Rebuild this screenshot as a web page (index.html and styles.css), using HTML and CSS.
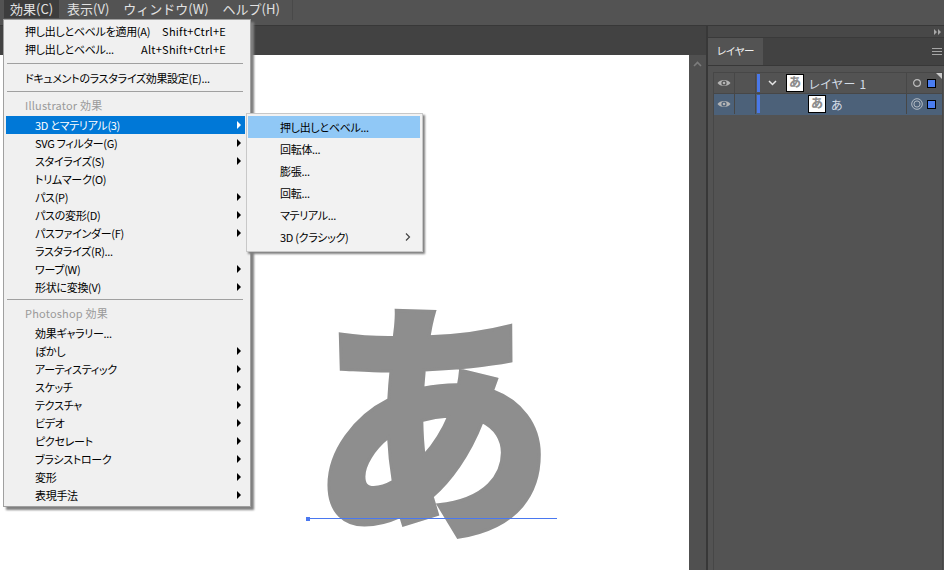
FILE: index.html
```html
<!DOCTYPE html>
<html lang="ja">
<head>
    <meta charset="UTF-8">
    <title>Illustrator 効果メニュー</title>
    <link rel="stylesheet" href="styles.css">
</head>
<body>
    <div class="app">
        <div class="menubar">
            <div class="menubar-item active">効果(C)</div>
            <div class="menubar-item">表示(V)</div>
            <div class="menubar-item">ウィンドウ(W)</div>
            <div class="menubar-item">ヘルプ(H)</div>
            <div class="menubar-sep"></div>
        </div>

        <div class="workspace">
            <div class="document">
                <div class="doc-tabs"></div>
                <div class="doc-body">
                    <div class="canvas">
                        <div class="big-glyph">あ</div>
                        <div class="baseline"></div>
                        <div class="anchor"></div>
                    </div>
                    <div class="scrollbar">
                        <svg class="scroll-up" width="9" height="6" viewBox="0 0 9 6"><path d="M1 5 L4.5 1.5 L8 5" fill="none" stroke="#7c7c7c" stroke-width="1.6"/></svg>
                    </div>
                </div>
            </div>

            <div class="panel">
                <div class="panel-top">
                    <svg width="8" height="6" viewBox="0 0 8 6"><path d="M0 0 L3 3 L0 6 Z M4 0 L7 3 L4 6 Z" fill="#a8a8a8"/></svg>
                </div>
                <div class="panel-tabs">
                    <div class="panel-tab">レイヤー</div>
                    <div class="panel-menu"><span></span><span></span><span></span></div>
                </div>
                <div class="layers">
                    <div class="layer-row">
                        <div class="col-eye">
                            <svg width="14" height="10" viewBox="0 0 14 10"><path d="M0.5 5 C3 1 11 1 13.5 5 C11 9 3 9 0.5 5 Z" fill="#b4b4b4"/><circle cx="7" cy="5" r="2.6" fill="#535353"/><circle cx="7" cy="5" r="1.3" fill="#b4b4b4"/></svg>
                        </div>
                        <div class="col-lock"></div>
                        <div class="col-color"><div class="color-bar"></div></div>
                        <div class="col-name">
                            <svg class="chevron" width="9" height="6" viewBox="0 0 9 6"><path d="M1 1 L4.5 4.5 L8 1" fill="none" stroke="#e6e6e6" stroke-width="1.5"/></svg>
                            <div class="thumb">あ</div>
                            <div class="layer-label">レイヤー 1</div>
                        </div>
                        <div class="col-target">
                            <svg width="12" height="12" viewBox="0 0 12 12"><circle cx="6" cy="6" r="3.4" fill="none" stroke="#bdbdbd" stroke-width="1.2"/></svg>
                            <div class="select-box"></div>
                            <div class="corner"></div>
                        </div>
                    </div>
                    <div class="layer-row selected">
                        <div class="col-eye">
                            <svg width="14" height="10" viewBox="0 0 14 10"><path d="M0.5 5 C3 1 11 1 13.5 5 C11 9 3 9 0.5 5 Z" fill="#b4b4b4"/><circle cx="7" cy="5" r="2.6" fill="#4c6179"/><circle cx="7" cy="5" r="1.3" fill="#b4b4b4"/></svg>
                        </div>
                        <div class="col-lock"></div>
                        <div class="col-color"><div class="color-bar"></div></div>
                        <div class="col-name sublayer">
                            <div class="thumb">あ</div>
                            <div class="layer-label">あ</div>
                        </div>
                        <div class="col-target">
                            <svg width="12" height="12" viewBox="0 0 14 14"><circle cx="7" cy="7" r="6.2" fill="none" stroke="#b9c0c8" stroke-width="1.1"/><circle cx="7" cy="7" r="3.6" fill="none" stroke="#b9c0c8" stroke-width="1.1"/></svg>
                            <div class="select-box"></div>
                        </div>
                    </div>
                </div>
            </div>
        </div>
    </div>

    <div class="menu effects-menu">
        <div class="item top"><span>押し出しとベベルを適用(A)</span><span class="shortcut">Shift+Ctrl+E</span></div>
        <div class="item top"><span>押し出しとベベル...</span><span class="shortcut">Alt+Shift+Ctrl+E</span></div>
        <div class="sep first"></div>
        <div class="item top"><span>ドキュメントのラスタライズ効果設定(E)...</span></div>
        <div class="sep"></div>
        <div class="heading">Illustrator 効果</div>
        <div class="item current sub"><span>3D とマテリアル(3)</span><i class="arrow"></i></div>
        <div class="item sub"><span>SVG フィルター(G)</span><i class="arrow"></i></div>
        <div class="item sub"><span>スタイライズ(S)</span><i class="arrow"></i></div>
        <div class="item"><span>トリムマーク(O)</span></div>
        <div class="item sub"><span>パス(P)</span><i class="arrow"></i></div>
        <div class="item sub"><span>パスの変形(D)</span><i class="arrow"></i></div>
        <div class="item sub"><span>パスファインダー(F)</span><i class="arrow"></i></div>
        <div class="item"><span>ラスタライズ(R)...</span></div>
        <div class="item sub"><span>ワープ(W)</span><i class="arrow"></i></div>
        <div class="item sub"><span>形状に変換(V)</span><i class="arrow"></i></div>
        <div class="sep last"></div>
        <div class="heading">Photoshop 効果</div>
        <div class="item"><span>効果ギャラリー...</span></div>
        <div class="item sub"><span>ぼかし</span><i class="arrow"></i></div>
        <div class="item sub"><span>アーティスティック</span><i class="arrow"></i></div>
        <div class="item sub"><span>スケッチ</span><i class="arrow"></i></div>
        <div class="item sub"><span>テクスチャ</span><i class="arrow"></i></div>
        <div class="item sub"><span>ビデオ</span><i class="arrow"></i></div>
        <div class="item sub"><span>ピクセレート</span><i class="arrow"></i></div>
        <div class="item sub"><span>ブラシストローク</span><i class="arrow"></i></div>
        <div class="item sub"><span>変形</span><i class="arrow"></i></div>
        <div class="item sub"><span>表現手法</span><i class="arrow"></i></div>
    </div>

    <div class="submenu">
        <div class="sub-item hover">押し出しとベベル...</div>
        <div class="sub-item">回転体...</div>
        <div class="sub-item">膨張...</div>
        <div class="sub-item">回転...</div>
        <div class="sub-item">マテリアル...</div>
        <div class="sub-item"><span>3D (クラシック)</span>
            <svg width="6" height="8" viewBox="0 0 6 8"><path d="M1 0.5 L4.5 4 L1 7.5" fill="none" stroke="#444" stroke-width="1.2"/></svg>
        </div>
    </div>
</body>
</html>
```

FILE: styles.css
```css
* {
    box-sizing: border-box;
}
html, body {
    margin: 0;
    height: 100%;
    overflow: hidden;
}
body {
    font-family: "Noto Sans CJK JP", "Noto Sans", sans-serif;
    font-size: 11px;
    letter-spacing: -0.3px;
    font-feature-settings: "palt";
    background: #535353;
    color: #000;
}
.app {
    display: flex;
    flex-direction: column;
    height: 570px;
}

/* menu bar */
.menubar {
    display: flex;
    height: 26px;
    flex: none;
    padding-left: 4px;
    background: #535353;
    border-bottom: 1px solid #383838;
}
.menubar-item {
    height: 18px;
    padding: 0 6px;
    margin-right: 2px;
    color: #e2e2e2;
    font-size: 13px;
    line-height: 17px;
    letter-spacing: 0;
    font-feature-settings: normal;
}
.menubar-item.active {
    background: #3d3d3d;
}
.menubar-sep {
    width: 1px;
    height: 20px;
    margin-left: 4px;
    background: #494949;
}

/* document */
.workspace {
    display: flex;
    flex: 1;
    min-height: 0;
}
.document {
    display: flex;
    flex-direction: column;
    width: 706px;
}
.doc-tabs {
    height: 29px;
    flex: none;
    background: #424242;
}
.doc-body {
    display: flex;
    flex: 1;
}
.canvas {
    position: relative;
    width: 689px;
    background: #fff;
    overflow: hidden;
}
.big-glyph {
    position: absolute;
    left: 307px;
    top: 227px;
    font-size: 250px;
    line-height: 250px;
    font-weight: 900;
    letter-spacing: 0;
    color: #8e8e8e;
    -webkit-text-stroke: 3px #8e8e8e;
    font-feature-settings: normal;
    transform: scale(0.985, 1.02);
}
.baseline {
    position: absolute;
    left: 307px;
    top: 463px;
    width: 250px;
    height: 1px;
    background: #4a78f0;
}
.anchor {
    position: absolute;
    left: 306px;
    top: 462px;
    width: 4px;
    height: 4px;
    background: #4a78f0;
}
.scrollbar {
    flex: 1;
    background: #505050;
    padding: 6px 0 0 4px;
}
.scroll-up {
    display: block;
}

/* layers panel */
.panel {
    display: flex;
    flex-direction: column;
    flex: 1;
    background: #535353;
    border-left: 2px solid #383838;
}
.panel-top {
    display: flex;
    justify-content: flex-end;
    align-items: center;
    height: 12px;
    flex: none;
    padding-right: 2px;
    background: #484848;
    border-bottom: 1px solid #3a3a3a;
}
.panel-tabs {
    display: flex;
    height: 28px;
    flex: none;
    background: #424242;
    border-bottom: 1px solid #383838;
}
.panel-tab {
    width: 55px;
    height: 27px;
    background: #535353;
    color: #f0f0f0;
    font-size: 10.5px;
    line-height: 25px;
    text-align: center;
}
.panel-menu {
    display: flex;
    flex-direction: column;
    gap: 2px;
    width: 10px;
    margin: 10px 2px 0 auto;
}
.panel-menu span {
    height: 1px;
    background: #a6a6a6;
}
.layers {
    flex: 1;
    margin: 6px 1px 0 5px;
    border: 1px solid #474747;
    border-bottom: 0;
}
.layer-row {
    display: flex;
    height: 21px;
    border-bottom: 1px solid #474747;
}
.layer-row.selected {
    background: #4c6179;
    border-bottom-color: #4c6179;
}
.col-eye {
    display: flex;
    justify-content: center;
    align-items: center;
    width: 21px;
    border-right: 1px solid #474747;
}
.col-lock {
    width: 21px;
    border-right: 1px solid #474747;
}
.col-color {
    width: 6px;
    padding: 1px 0 1px 1px;
}
.color-bar {
    width: 3px;
    height: 18px;
    background: #4a78e8;
}
.col-name {
    display: flex;
    align-items: center;
    flex: 1;
    padding-left: 6px;
    color: #d3dce6;
    border-right: 1px solid #474747;
}
.col-name.sublayer {
    padding-left: 46px;
}
.chevron {
    margin-right: 9px;
}
.thumb {
    flex: none;
    width: 18px;
    height: 18px;
    background: #fff;
    border: 1px solid #000;
    color: #8e8e8e;
    font-size: 12px;
    font-weight: 900;
    line-height: 14px;
    text-align: center;
    letter-spacing: 0;
    font-feature-settings: normal;
}
.layer-label {
    margin-left: 5px;
    font-size: 12px;
    letter-spacing: 0.8px;
}
.col-target {
    position: relative;
    display: flex;
    align-items: center;
    flex: none;
    width: 35px;
    padding-left: 4px;
    gap: 4px;
}
.select-box {
    width: 9px;
    height: 9px;
    background: #4a7df0;
    border: 1px solid #000;
}
.corner {
    position: absolute;
    right: 0;
    top: 0;
    border-top: 6px solid #c8c8c8;
    border-left: 6px solid transparent;
}

/* effects menu */
.menu {
    position: absolute;
    left: 3px;
    top: 19px;
    width: 248px;
    height: 488px;
    padding: 2px 5px 0 2px;
    background: #f0f0f0;
    border: 1px solid #a0a0a0;
    box-shadow: 3px 3px 2px #808080;
}
.item {
    display: flex;
    align-items: center;
    justify-content: space-between;
    height: 18px;
    padding: 0 4px 0 29px;
    line-height: 18px;
    white-space: nowrap;
}
.item.top {
    padding: 0 19px 0 19px;
}
.item.current {
    background: #0078d7;
    color: #fff;
}
.shortcut {
    letter-spacing: 0.25px;
}
.heading {
    height: 18px;
    margin-bottom: 2px;
    padding-left: 19px;
    color: #9a9a9a;
    line-height: 18px;
    letter-spacing: 0.2px;
}
.sep {
    height: 1px;
    margin: 4px 2px 4px 1px;
    background: #a0a0a0;
}
.sep.first {
    margin-top: 5px;
    margin-bottom: 5px;
}
.sep.last {
    margin-top: 3px;
}
.arrow {
    width: 0;
    height: 0;
    border-left: 4px solid #000;
    border-top: 4px solid transparent;
    border-bottom: 4px solid transparent;
}
.current .arrow {
    border-left-color: #fff;
}

/* 3D submenu */
.submenu {
    position: absolute;
    left: 246px;
    top: 113px;
    width: 177px;
    height: 139px;
    padding: 2px 1px;
    background: #f2f2f2;
    border: 1px solid #c8c8c8;
    box-shadow: 2px 2px 2px #808080;
}
.sub-item {
    display: flex;
    align-items: center;
    justify-content: space-between;
    height: 22px;
    width: 172px;
    padding: 0 9px 1px 32px;
    white-space: nowrap;
}
.sub-item.hover {
    background: #90c8f6;
}
```
